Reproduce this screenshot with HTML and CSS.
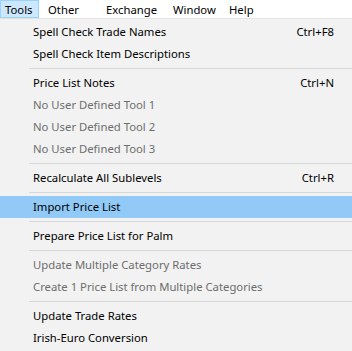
FILE: index.html
```html
<!DOCTYPE html>
<html lang="en">
<head>
    <meta charset="UTF-8">
    <title>Tools menu</title>
    <link rel="stylesheet" href="styles.css">
</head>
<body>
    <nav class="menubar">
        <span class="menubar-item tools active">Tools</span>
        <span class="menubar-item other">Other</span>
        <span class="menubar-item exchange">Exchange</span>
        <span class="menubar-item window">Window</span>
        <span class="menubar-item">Help</span>
    </nav>

    <ul class="menu">
        <li class="item"><span>Spell Check Trade Names</span><span class="key">Ctrl+F8</span></li>
        <li class="item"><span>Spell Check Item Descriptions</span></li>
        <li class="sep"></li>
        <li class="item"><span>Price List Notes</span><span class="key">Ctrl+N</span></li>
        <li class="item disabled"><span>No User Defined Tool 1</span></li>
        <li class="item disabled"><span>No User Defined Tool 2</span></li>
        <li class="item disabled"><span>No User Defined Tool 3</span></li>
        <li class="sep"></li>
        <li class="item"><span>Recalculate All Sublevels</span><span class="key">Ctrl+R</span></li>
        <li class="sep"></li>
        <li class="item hover"><span>Import Price List</span></li>
        <li class="sep"></li>
        <li class="item"><span>Prepare Price List for Palm</span></li>
        <li class="sep"></li>
        <li class="item disabled"><span>Update Multiple Category Rates</span></li>
        <li class="item disabled"><span>Create 1 Price List from Multiple Categories</span></li>
        <li class="sep"></li>
        <li class="item"><span>Update Trade Rates</span></li>
        <li class="item"><span>Irish-Euro Conversion</span></li>
    </ul>
</body>
</html>
```

FILE: styles.css
```css
* {
    margin: 0;
    padding: 0;
    box-sizing: border-box;
}

body {
    font-family: "Noto Sans", "Open Sans", sans-serif;
    font-size: 11.3px;
    color: #000;
    background-color: #f2f2f2;
    width: 352px;
    height: 351px;
    overflow: hidden;
}

.menubar {
    display: flex;
    height: 19px;
    background-color: #fff;
    border-bottom: 1px solid #e3e3e3;
}

.menubar-item {
    padding-left: 8px;
    line-height: 17px;
    height: 18px;
    border: 1px solid transparent;
}

.menubar-item.tools {
    width: 39px;
    padding-left: 4px;
}

.menubar-item.active {
    background-color: #cce8ff;
    border-color: #99d1ff;
}

.menubar-item.other {
    width: 58px;
}

.menubar-item.exchange {
    width: 67px;
}

.menubar-item.window {
    width: 56px;
}

.menu {
    list-style: none;
    padding-top: 2px;
}

.item {
    display: flex;
    justify-content: space-between;
    height: 22px;
    line-height: 21px;
    padding: 0 18px 0 33px;
}

.item.disabled {
    color: #6d6d6d;
}

.item.hover {
    background-color: #91c9f7;
}

.key {
    text-align: right;
}

.sep {
    height: 7px;
    margin-left: 29px;
    border-bottom: 1px solid #d7d7d7;
    transform: translateY(-3px);
}
```
